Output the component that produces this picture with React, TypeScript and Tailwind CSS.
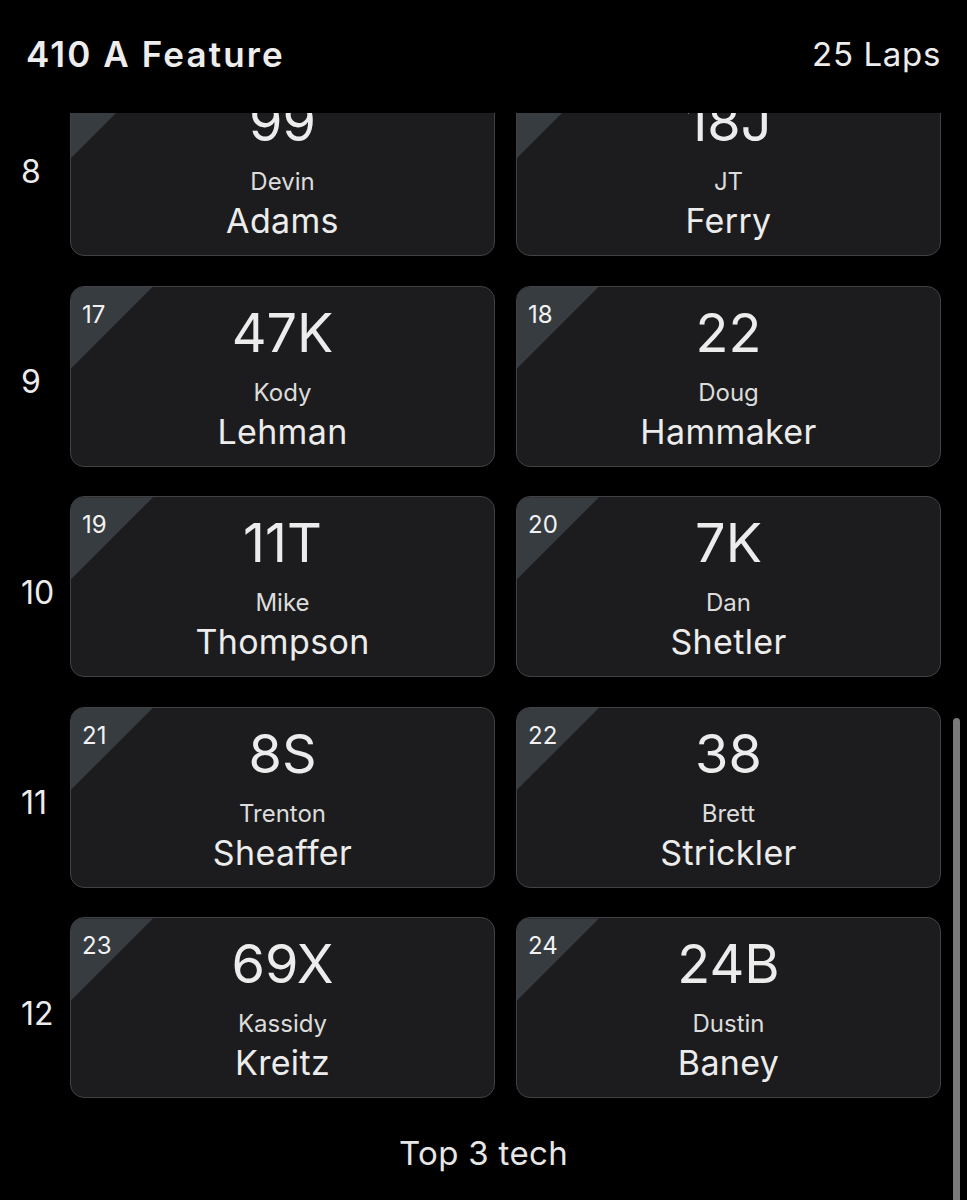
type Driver = { pos: number; car: string; first: string; last: string };

const rows: { row: number; cars: Driver[] }[] = [
  { row: 8, cars: [{ pos: 15, car: "99", first: "Devin", last: "Adams" }, { pos: 16, car: "18J", first: "JT", last: "Ferry" }] },
  { row: 9, cars: [{ pos: 17, car: "47K", first: "Kody", last: "Lehman" }, { pos: 18, car: "22", first: "Doug", last: "Hammaker" }] },
  { row: 10, cars: [{ pos: 19, car: "11T", first: "Mike", last: "Thompson" }, { pos: 20, car: "7K", first: "Dan", last: "Shetler" }] },
  { row: 11, cars: [{ pos: 21, car: "8S", first: "Trenton", last: "Sheaffer" }, { pos: 22, car: "38", first: "Brett", last: "Strickler" }] },
  { row: 12, cars: [{ pos: 23, car: "69X", first: "Kassidy", last: "Kreitz" }, { pos: 24, car: "24B", first: "Dustin", last: "Baney" }] },
];

function Card({ d }: { d: Driver }) {
  return (
    <div className="relative flex-1 h-[181px] rounded-[14px] border-[1.5px] border-[#424245] bg-[#1c1c1e] overflow-hidden flex flex-col items-center pt-[16px]">
      <div className="absolute top-0 left-0 w-[82px] h-[82px] bg-[#373c41] [clip-path:polygon(0_0,100%_0,0_100%)]" />
      <span className="absolute top-[13px] left-[11px] text-[24px] leading-[30px] text-[#f2f2f2]">{d.pos}</span>
      <span className="relative text-[54px] leading-[60px] text-[#ececec]">{d.car}</span>
      <span className="mt-[16px] text-[24px] leading-[28px] text-[#dcdcdc]">{d.first}</span>
      <span className="mt-[5px] text-[34px] leading-[40px] tracking-[0.01em] text-[#ececec]">{d.last}</span>
    </div>
  );
}

export default function App() {
  return (
    <div className="relative h-[1200px] w-[967px] bg-black overflow-hidden text-white" style={{ fontFamily: "Inter, 'Noto Sans', sans-serif" }}>
      <div className="h-[113px] flex items-center justify-between pl-[26px] pr-[26px] pb-[4px]">
        <h1 className="text-[35px] font-semibold tracking-[0.06em] text-[#ededed]">410 A Feature</h1>
        <span className="text-[33px] tracking-[0.02em] text-[#ededed]">25 Laps</span>
      </div>
      <div className="h-[1087px] overflow-hidden">
        <div className="-mt-[38px] flex flex-col gap-[29.6px]">
          {rows.map((r) => (
            <div key={r.row} className="flex items-center pl-[21px] pr-[26px]">
              <span className="w-[49px] mt-[12px] text-[32px] leading-[36px] text-[#ececec]">{r.row}</span>
              <div className="flex-1 flex gap-[21px]">
                {r.cars.map((d) => (
                  <Card key={d.pos} d={d} />
                ))}
              </div>
            </div>
          ))}
          <div className="mt-[5px] text-center text-[33px] leading-[40px] tracking-[0.01em] text-[#e6e6e6]">Top 3 tech</div>
        </div>
      </div>
      <div className="absolute right-[7px] top-[718px] w-[7px] h-[500px] rounded-full bg-[#7a7a7a]" />
    </div>
  );
}
